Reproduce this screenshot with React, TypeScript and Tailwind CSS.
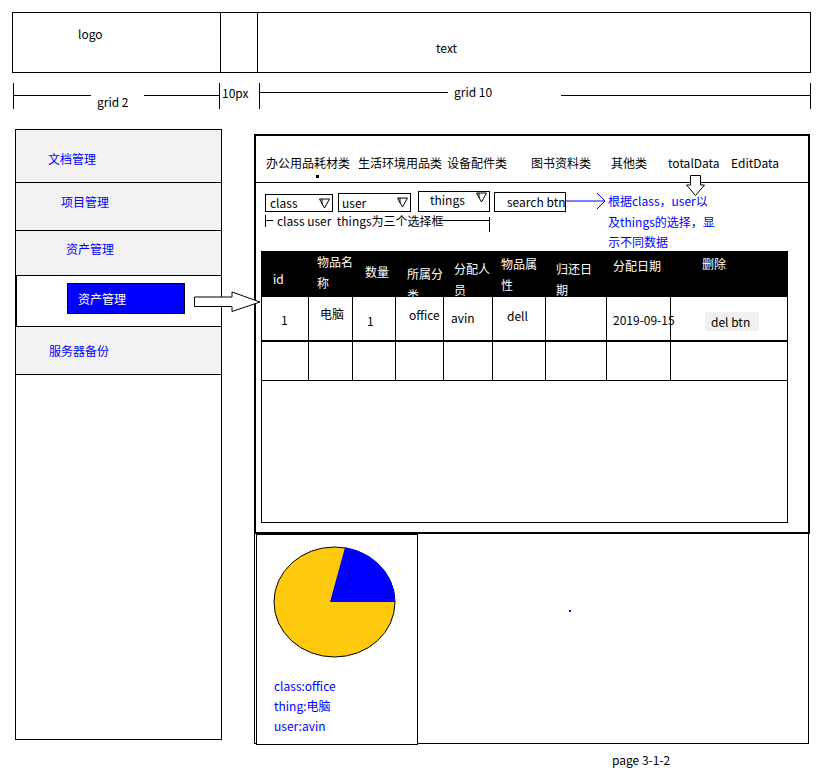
import React from 'react';

const font = "font-['Noto_Sans_CJK_SC','Noto_Sans',sans-serif]";

const navItems = [
  { label: '文档管理', box: 'h-[53px] pl-[32px] pt-[21px] bg-[#f2f2f2]' },
  { label: '项目管理', box: 'h-[48px] pl-[45px] pt-[11px] bg-[#f2f2f2]' },
  { label: '资产管理', box: 'h-[45px] pl-[50px] pt-[10px] bg-[#f2f2f2]' },
];

const tabs = [
  { label: '办公用品耗材类', w: 'w-[92px]' },
  { label: '生活环境用品类', w: 'w-[89px]' },
  { label: '设备配件类', w: 'w-[84px]' },
  { label: '图书资料类', w: 'w-[80px]' },
  { label: '其他类', w: 'w-[57px]' },
  { label: 'totalData', w: 'w-[63px]' },
  { label: 'EditData', w: 'w-[60px]' },
];

const columns = [
  { w: 'w-[47px]', head: ['id'], hp: 'pl-[11px] pt-[17px]', cell: '1', cp: 'pl-[19px] pt-[15px]' },
  { w: 'w-[44px]', head: ['物品名', '称'], hp: 'pl-[8px] pt-0', cell: '电脑', cp: 'pl-[11px] pt-[9px]' },
  { w: 'w-[43px]', head: ['数量'], hp: 'pl-[12px] pt-[10px]', cell: '1', cp: 'pl-[14px] pt-[16px]' },
  { w: 'w-[48px]', head: ['所属分', '类'], hp: 'pl-[11px] pt-[12px]', cell: 'office', cp: 'pl-[13px] pt-[10px]' },
  { w: 'w-[49px]', head: ['分配人', '员'], hp: 'pl-[10px] pt-[7px]', cell: 'avin', cp: 'pl-[7px] pt-[13px]' },
  { w: 'w-[53px]', head: ['物品属', '性'], hp: 'pl-[8px] pt-[2px]', cell: 'dell', cp: 'pl-[14px] pt-[11px]' },
  { w: 'w-[61px]', head: ['归还日', '期'], hp: 'pl-[10px] pt-[7px]', cell: '', cp: '' },
  { w: 'w-[64px]', head: ['分配日期'], hp: 'pl-[6px] pt-[4px]', cell: '2019-09-15', cp: 'pl-[6px] pt-[15px]' },
];

function SelectBox({ label, box, text }: { label: string; box: string; text: string }) {
  return (
    <div className={`flex items-center justify-between border border-black bg-white ${box}`}>
      <span className={`leading-[16px] ${text}`}>{label}</span>
      <svg width="11" height="11" viewBox="0 0 11 11" className="mr-[2px]">
        <polygon points="0.5,1 10.5,1 5.5,10" fill="none" stroke="black" />
        <line x1="3" y1="1" x2="3" y2="6" stroke="black" />
      </svg>
    </div>
  );
}

function PieCard() {
  return (
    <div className="ml-[1px] h-[211px] w-[162px] shrink-0 border border-black bg-white">
      <svg width="123" height="112" viewBox="0 0 123 112" className="ml-[16px] mt-[11px]">
        <ellipse cx="61.5" cy="56" rx="60.5" ry="55" fill="#ffc90e" stroke="black" />
        <path d="M57 56 L72 1.5 A60.5 55 0 0 1 122 56 Z" fill="#0000ff" />
      </svg>
      <div className="mt-[18px] pl-[17px] leading-[20px] text-[#0000ff]">
        <div>class:office</div>
        <div>thing:电脑</div>
        <div>user:avin</div>
      </div>
    </div>
  );
}

export default function App() {
  return (
    <div className={`relative h-[773px] w-[831px] overflow-hidden bg-white text-[12px] text-black ${font}`}>
      {/* header */}
      <div className="ml-[12px] mt-[12px] flex h-[61px] w-[799px] border border-black">
        <div className="w-[208px] border-r border-black pl-[65px] pt-[13px] leading-[16px]">logo</div>
        <div className="w-[37px] border-r border-black" />
        <div className="flex-1 pl-[178px] pt-[27px] leading-[16px]">text</div>
      </div>

      {/* grid measurements */}
      <div className="mt-[10px] flex h-[27px] items-start">
        <div className="ml-[13px] flex h-[26px] w-[207px] items-start border-l border-r border-black">
          <div className="mt-[12px] h-px w-[77px] bg-black" />
          <span className="ml-[6px] mt-[11px] leading-[16px]">grid 2</span>
          <div className="ml-auto mt-[12px] h-px w-[75px] bg-black" />
        </div>
        <div className="w-[39px] pl-[2px] pt-[2px] leading-[16px]">10px</div>
        <div className="flex h-[26px] w-[552px] items-start border-l border-r border-black">
          <div className="mt-[9px] h-px w-[188px] bg-black" />
          <span className="ml-[6px] mt-[1px] leading-[16px]">grid 10</span>
          <div className="ml-auto mt-[12px] h-px w-[249px] bg-black" />
        </div>
      </div>

      {/* body */}
      <div className="mt-[19px] flex items-start">
        <div className="ml-[15px] flex h-[611px] w-[207px] flex-col border border-black">
          {navItems.map((item) => (
            <div key={item.label} className={`border-b border-black leading-[16px] text-[#0000ff] ${item.box}`}>
              {item.label}
            </div>
          ))}
          <div className="h-[51px] border-b border-l border-black pl-[50px] pt-[7px]">
            <div className="flex h-[31px] w-[118px] items-center border border-black bg-[#0000ff] pl-[10px] text-white">
              资产管理
            </div>
          </div>
          <div className="h-[48px] border-b border-black bg-[#f2f2f2] pl-[33px] pt-[16px] leading-[16px] text-[#0000ff]">
            服务器备份
          </div>
        </div>

        <div className="ml-[32px] mt-[5px] w-[556px]">
          <div className="h-[400px] border-2 border-black">
            {/* tabs */}
            <div className="flex h-[47px] border-b border-black pl-[10px] pt-[19px]">
              {tabs.map((tab, i) => (
                <div key={tab.label} className={`flex shrink-0 flex-col ${tab.w}`}>
                  <span className="whitespace-nowrap leading-[16px]">{tab.label}</span>
                  {i === 0 && <div className="ml-[50px] mt-[4px] h-[3px] w-[3px] bg-black" />}
                </div>
              ))}
            </div>

            {/* filters */}
            <div className="flex h-[68px] pl-[9px] pt-[8px]">
              <div className="flex w-[301px] shrink-0 flex-col">
                <div className="flex h-[21px] items-end">
                  <SelectBox label="class" box="h-[18px] w-[68px]" text="pl-[4px]" />
                  <SelectBox label="user" box="ml-[5px] h-[19px] w-[73px]" text="pl-[3px]" />
                  <SelectBox label="things" box="ml-[7px] h-[21px] w-[72px] items-start" text="pl-[11px]" />
                  <div className="ml-[4px] flex h-[20px] w-[72px] items-center whitespace-nowrap border border-black pl-[12px] leading-[16px]">
                    search btn
                  </div>
                </div>
                <div className="mt-[1px] flex h-[20px] items-start">
                  <div className="mt-[2px] h-[12px] w-px bg-black" />
                  <div className="mt-[7px] h-px w-[7px] bg-black" />
                  <span className="ml-[4px] w-[157px] whitespace-pre leading-[16px]">class user  things为三个选择框</span>
                  <div className="ml-[7px] mt-[7px] h-px w-[48px] bg-black" />
                  <div className="mt-[4px] h-[15px] w-px bg-black" />
                </div>
              </div>
              <svg width="40" height="20" viewBox="0 0 40 20" className="shrink-0">
                <line x1="0" y1="10" x2="39" y2="10" stroke="#0000ff" />
                <polyline points="31,2 39,10 31,18" fill="none" stroke="#0000ff" />
              </svg>
              <div className="ml-[2px] leading-[20.5px] text-[#0000ff]">
                <div>根据class，user以</div>
                <div>及things的选择，显</div>
                <div>示不同数据</div>
              </div>
            </div>

            {/* table */}
            <div className="ml-[5px] h-[272px] w-[527px] border-b border-l border-r border-black">
              <div className="flex h-[46px] bg-black leading-[21px] text-white">
                {columns.map((c) => (
                  <div key={c.head.join('')} className={`h-full shrink-0 overflow-hidden ${c.w} ${c.hp}`}>
                    {c.head.map((line) => (
                      <div key={line}>{line}</div>
                    ))}
                  </div>
                ))}
                <div className="flex-1 pl-[31px] pt-[2px]">删除</div>
              </div>
              <div className="flex h-[45px] border-b-2 border-black leading-[16px]">
                {columns.map((c) => (
                  <div key={c.head.join('')} className={`h-full shrink-0 whitespace-nowrap border-r border-black ${c.w} ${c.cp}`}>
                    {c.cell}
                  </div>
                ))}
                <div className="flex-1 pl-[34px] pt-[15px]">
                  <div className="flex h-[19px] w-[54px] items-center bg-[#f0f0f0] pl-[6px]">del btn</div>
                </div>
              </div>
              <div className="flex h-[39px] border-b border-black">
                {columns.map((c) => (
                  <div key={c.head.join('')} className={`h-full shrink-0 border-r border-black ${c.w}`} />
                ))}
                <div className="flex-1" />
              </div>
            </div>
          </div>

          {/* chart area */}
          <div className="flex h-[210px] w-[555px] items-start border border-t-0 border-black">
            <PieCard />
            <div className="ml-[151px] mt-[76px] h-[2px] w-[2px] bg-[#0000ff]" />
          </div>
          <div className="ml-[358px] mt-[8px] leading-[16px]">page 3-1-2</div>
        </div>
      </div>

      {/* annotation arrows */}
      <svg width="70" height="24" viewBox="0 0 70 24" className="absolute left-[194px] top-[290px]">
        <polygon points="0.5,7 38,7 38,2 66,12 38,21.5 38,16.5 0.5,16.5" fill="white" stroke="black" />
      </svg>
      <svg width="20" height="22" viewBox="0 0 20 22" className="absolute left-[686px] top-[175px]">
        <polygon points="4.5,0.5 14.5,0.5 14.5,10 18.5,10 9.5,20.5 0.5,10 4.5,10" fill="white" stroke="black" />
      </svg>
    </div>
  );
}
